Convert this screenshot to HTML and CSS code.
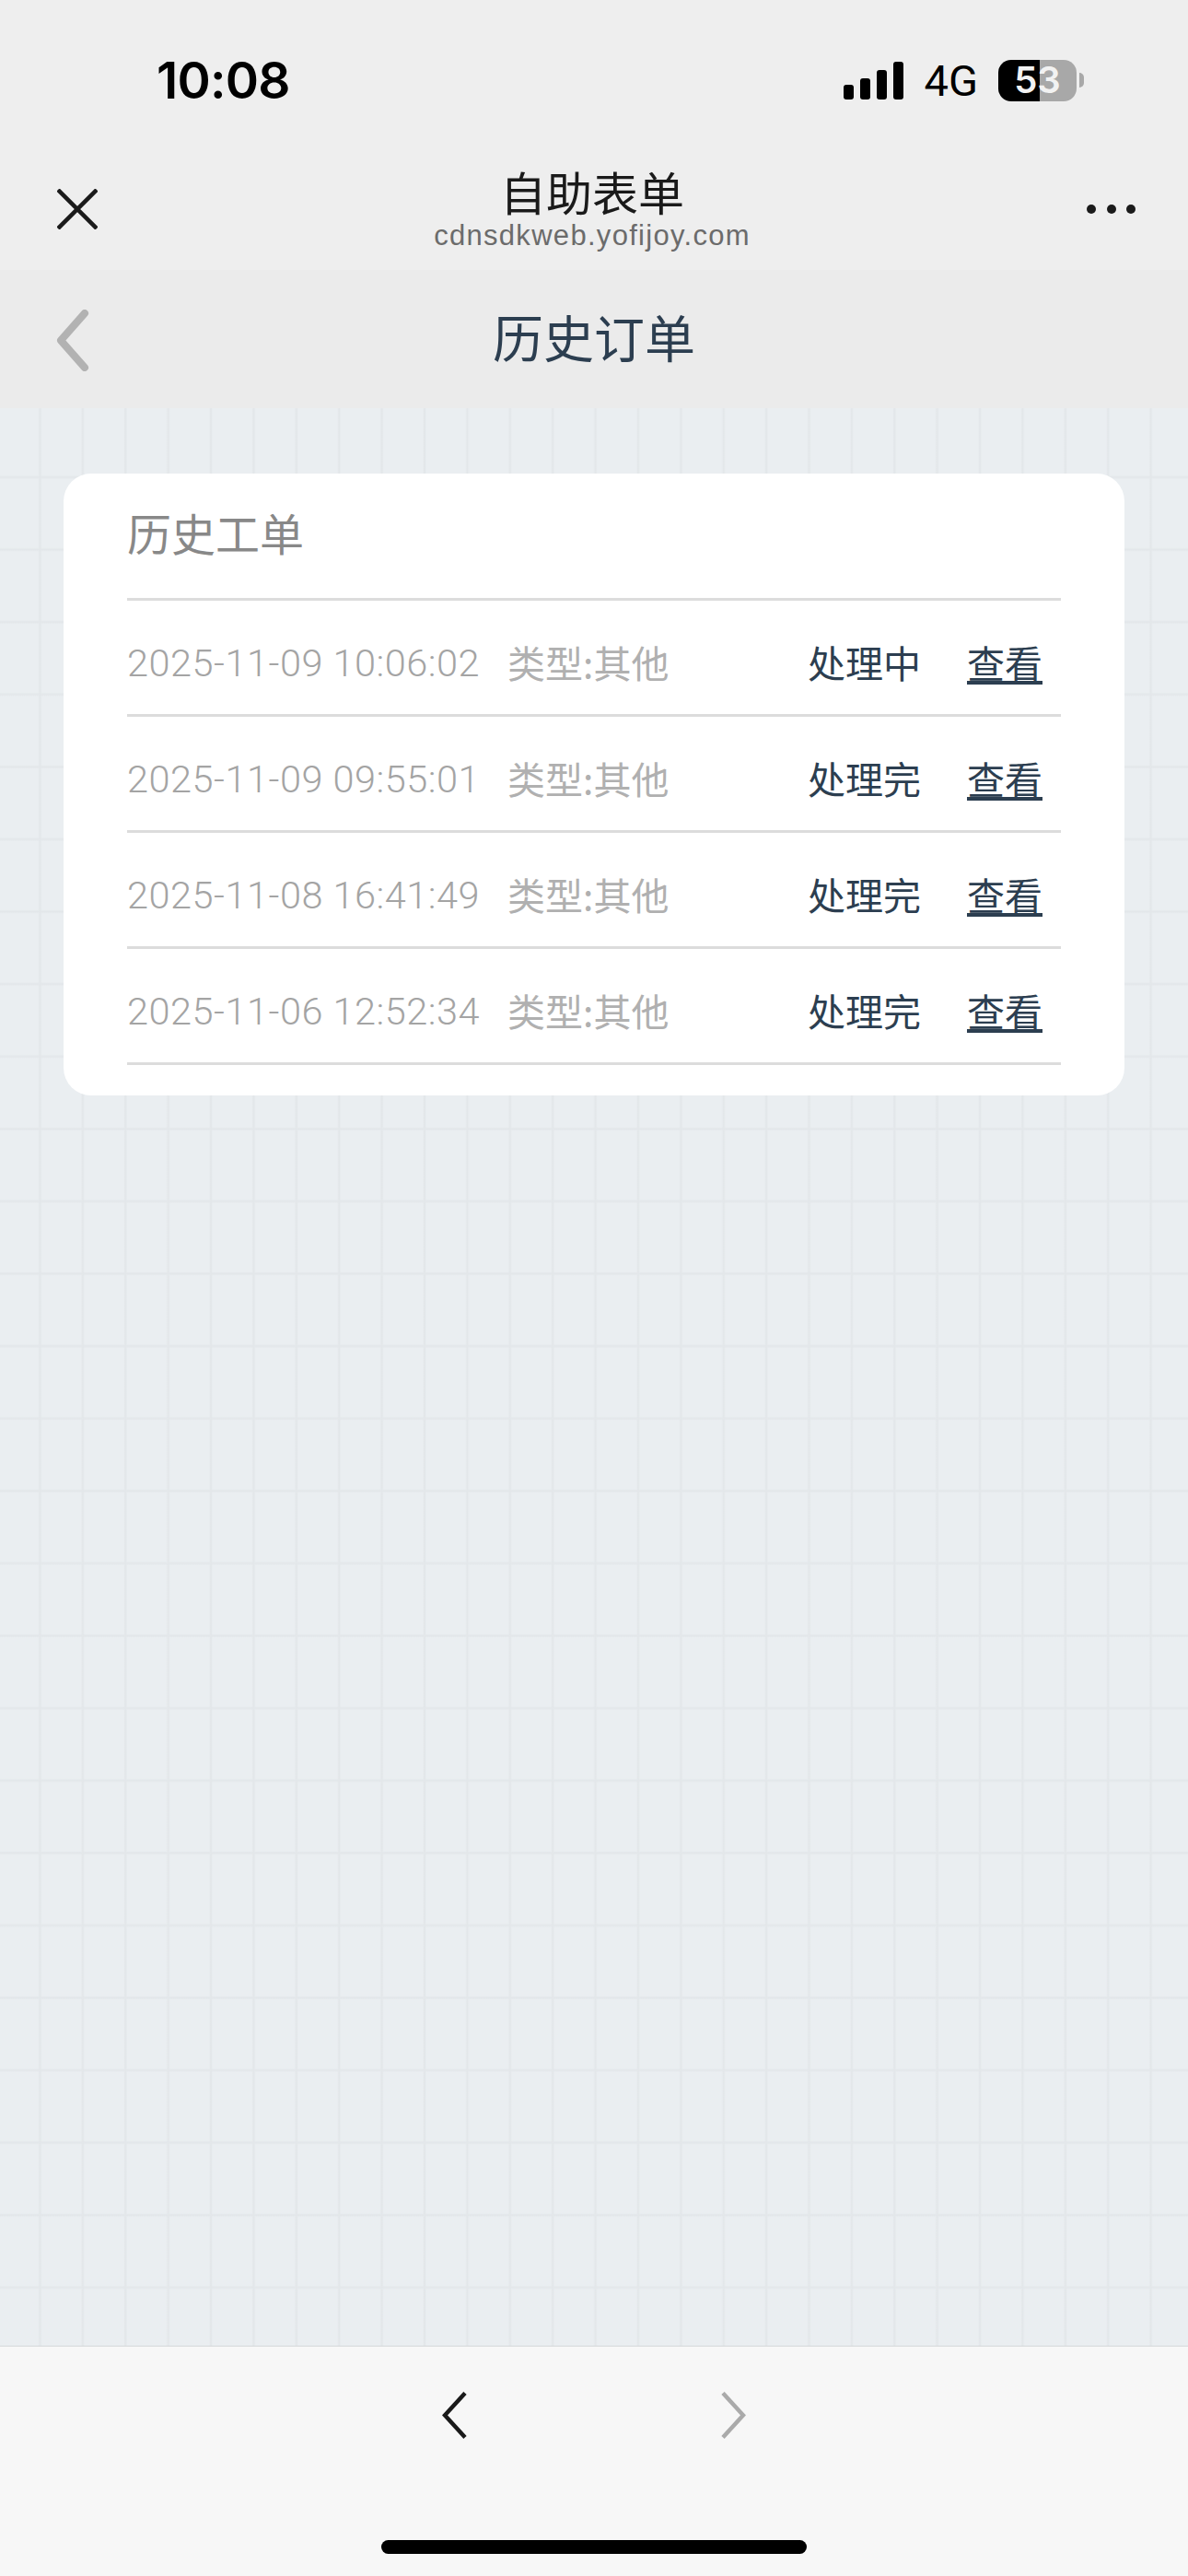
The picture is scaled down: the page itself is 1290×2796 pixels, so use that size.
FILE: index.html
```html
<!DOCTYPE html>
<html lang="zh-CN">
<head>
  <meta charset="UTF-8" />
  <meta name="viewport" content="width=device-width, initial-scale=1" />
  <title>历史订单</title>
  <link rel="stylesheet" href="styles.css">
</head>
<body>

  <header class="top">
    <div class="status-bar">
      <span class="time">10:08</span>
      <div class="status-right">
        <div class="signal">
          <span class="bar bar-1"></span>
          <span class="bar bar-2"></span>
          <span class="bar bar-3"></span>
          <span class="bar bar-4"></span>
        </div>
        <span class="network">4G</span>
        <div class="battery"><span class="battery-level">53</span></div>
        <span class="battery-nub"></span>
      </div>
    </div>
    <div class="app-bar">
      <svg class="icon-close" viewBox="0 0 44 44">
        <path d="M1 1 L43 43 M43 1 L1 43" />
      </svg>
      <div class="app-title">
        <div class="app-name">自助表单</div>
        <div class="app-url">cdnsdkweb.yofijoy.com</div>
      </div>
      <div class="dots"><span></span><span></span><span></span></div>
    </div>
  </header>

  <div class="sub-header">
    <svg class="icon-back" viewBox="0 0 36 67">
      <path d="M31 4 L5 33.5 L31 63" />
    </svg>
    <h1>历史订单</h1>
  </div>

  <main class="content">
    <section class="card">
      <h2>历史工单</h2>
      <div class="row">
        <span class="date">2025-11-09 10:06:02</span>
        <span class="type">类型:其他</span>
        <span class="state">处理中</span>
        <a class="view" href="#">查看</a>
      </div>
      <div class="row">
        <span class="date">2025-11-09 09:55:01</span>
        <span class="type">类型:其他</span>
        <span class="state">处理完</span>
        <a class="view" href="#">查看</a>
      </div>
      <div class="row">
        <span class="date">2025-11-08 16:41:49</span>
        <span class="type">类型:其他</span>
        <span class="state">处理完</span>
        <a class="view" href="#">查看</a>
      </div>
      <div class="row">
        <span class="date">2025-11-06 12:52:34</span>
        <span class="type">类型:其他</span>
        <span class="state">处理完</span>
        <a class="view" href="#">查看</a>
      </div>
    </section>
  </main>

  <footer class="bottom">
    <div class="nav-arrows">
      <svg class="arrow arrow-prev" viewBox="0 0 27 51">
        <path d="M25 1.5 L3 25.5 L25 49.5" />
      </svg>
      <svg class="arrow arrow-next" viewBox="0 0 27 51">
        <path d="M2 1.5 L24 25.5 L2 49.5" />
      </svg>
    </div>
    <div class="home-bar"></div>
  </footer>

</body>
</html>
```

FILE: styles.css
```css
* { box-sizing: border-box; }
html, body { margin: 0; padding: 0; }
body { width: 1290px; height: 2796px; display: flex; flex-direction: column; font-family: "Noto Sans CJK SC", sans-serif; background: #eaeef1; overflow: hidden; }

.top { background: #eeeeee; height: 293px; flex: none; }

.status-bar { height: 160px; padding: 14px 113px 0 170px; display: flex; align-items: center; justify-content: space-between; }
.time { font-family: Inter, sans-serif; font-weight: 600; font-size: 55px; color: #000; letter-spacing: -0.8px; }
.status-right { display: flex; align-items: center; }
.signal { display: flex; align-items: flex-end; gap: 7px; height: 41px; margin-right: 23px; }
.bar { width: 11px; background: #000; border-radius: 3px; }
.bar-1 { height: 16px; }
.bar-2 { height: 23px; }
.bar-3 { height: 32px; }
.bar-4 { height: 41px; }
.network { font-family: Roboto, sans-serif; font-size: 47px; color: #000; line-height: 1; margin-right: 22px; }
.battery { width: 85px; height: 45px; border-radius: 14px; background: linear-gradient(to right, #000 53%, #a8a8a8 53%); display: flex; align-items: center; justify-content: center; }
.battery-level { font-family: Inter, sans-serif; font-weight: 600; font-size: 40px; line-height: 1; color: #f2f2f2; }
.battery-nub { width: 5px; height: 16px; margin-left: 3px; background: #a8a8a8; border-radius: 0 8px 8px 0; }

.app-bar { height: 133px; padding: 0 57px 0 62px; display: grid; grid-template-columns: 44px 1fr 53px; align-items: center; }
.icon-close { width: 44px; height: 44px; }
.icon-close path { fill: none; stroke: #1a1a1a; stroke-width: 4.5; }
.app-title { text-align: center; }
.app-name { font-size: 50px; line-height: 54px; color: #1a1a1a; }
.app-url { margin-top: 5px; font-family: "Liberation Sans", sans-serif; font-size: 31px; line-height: 34px; color: #6b6b6b; letter-spacing: 1.3px; }
.dots { display: flex; justify-content: space-between; }
.dots span { width: 10px; height: 10px; border-radius: 50%; background: #1a1a1a; }

.sub-header { height: 150px; flex: none; padding: 0 61px 8px; background: #ebebeb; display: grid; grid-template-columns: 36px 1fr 36px; align-items: center; }
.icon-back { width: 36px; height: 67px; margin-top: 11px; }
.icon-back path { fill: none; stroke: #b2b2b2; stroke-width: 8; stroke-linecap: round; stroke-linejoin: round; }
.sub-header h1 { margin: 0; font-size: 55px; line-height: 64px; font-weight: 400; text-align: center; color: #2c3e50; }

.content {
  flex: 1;
  padding: 71px 69px 0;
  background-color: #eaeef1;
  background-image:
    linear-gradient(to right, transparent 41.5px, #e3e7ea 43px, #e3e7ea 44px, transparent 45.5px),
    linear-gradient(to bottom, transparent 73px, #e3e7ea 74.5px, #e3e7ea 75.5px, transparent 77px);
  background-size: 46.4px 100%, 100% 78.6px;
}

.card { background: #fff; border-radius: 30px; padding: 0 69px 33px; }
.card h2 { margin: 0; height: 138px; border-bottom: 3px solid #dcdcdc; font-size: 48px; font-weight: 400; line-height: 126px; color: #888; }

.row { height: 126px; padding: 8px 20px 0 0; border-bottom: 3px solid #dcdcdc; display: flex; align-items: center; font-size: 41px; }
.date { width: 413px; margin-top: 4px; font-family: Roboto, sans-serif; font-weight: 300; font-size: 41.5px; letter-spacing: 0.5px; color: #a4a4a4; }
.type { color: #b0b0b0; }
.state { margin-left: auto; color: #2c3e50; }
.view { margin-left: 50px; color: #2c3e50; }

.bottom { height: 250px; flex: none; padding-top: 49px; background: #f7f7f7; border-top: 1px solid #d5d8da; display: flex; flex-direction: column; align-items: center; }
.nav-arrows { display: flex; gap: 276px; }
.arrow { width: 27px; height: 51px; }
.arrow path { fill: none; stroke-width: 4.5; }
.arrow-prev path { stroke: #1a1a1a; }
.arrow-next path { stroke: #aaaaaa; }
.home-bar { width: 462px; height: 15px; margin-top: auto; margin-bottom: 24px; border-radius: 8px; background: #000; }
```
